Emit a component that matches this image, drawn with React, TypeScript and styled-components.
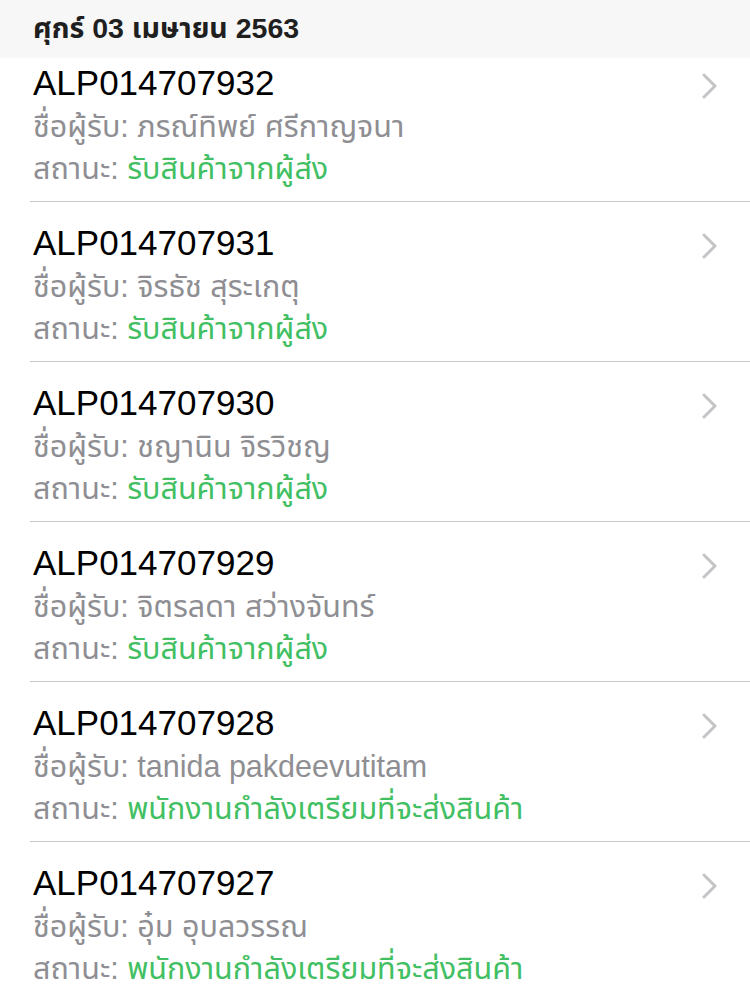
import React from "react";
import styled, { createGlobalStyle } from "styled-components";

const Global = createGlobalStyle`
  html, body { margin: 0; padding: 0; background: #ffffff; }
  body { font-family: "Liberation Sans", "Noto Sans Thai", "Noto Sans", sans-serif; -webkit-font-smoothing: antialiased; }
`;

const Page = styled.div`
  width: 750px;
  height: 989px;
  overflow: hidden;
  background: #ffffff;
`;

const SectionHeader = styled.div`
  height: 58px;
  background: #f7f7f7;
  display: flex;
  align-items: center;
  padding-left: 33px;
  font-size: 28.5px;
  font-weight: 700;
  color: #1f1f1f;
  box-sizing: border-box;
`;

const Row = styled.div<{ $first?: boolean }>`
  display: flex;
  align-items: flex-start;
  margin-left: 30px;
  height: ${(p) => (p.$first ? 144 : 160)}px;
  box-sizing: border-box;
  border-bottom: 1px solid #c8c7cc;
  padding-top: ${(p) => (p.$first ? 3 : 19)}px;
`;

const Body = styled.div`
  flex: 1;
  display: flex;
  flex-direction: column;
  padding-left: 3px;
`;

const Code = styled.div`
  font-size: 35px;
  line-height: 44px;
  color: #000000;
`;

const Line = styled.div`
  font-size: 30.5px;
  line-height: 42px;
  color: #8e8e93;
`;

const Status = styled.span`
  color: #42bf62;
`;

const Chevron = styled.div`
  width: 48px;
  display: flex;
  justify-content: flex-start;
  padding-top: 12px;
`;

const items = [
  { code: "ALP014707932", name: "ภรณ์ทิพย์ ศรีกาญจนา", status: "รับสินค้าจากผู้ส่ง" },
  { code: "ALP014707931", name: "จิรธัช สุระเกตุ", status: "รับสินค้าจากผู้ส่ง" },
  { code: "ALP014707930", name: "ชญานิน จิรวิชญ", status: "รับสินค้าจากผู้ส่ง" },
  { code: "ALP014707929", name: "จิตรลดา สว่างจันทร์", status: "รับสินค้าจากผู้ส่ง" },
  { code: "ALP014707928", name: "tanida pakdeevutitam", status: "พนักงานกำลังเตรียมที่จะส่งสินค้า" },
  { code: "ALP014707927", name: "อุ๋ม อุบลวรรณ", status: "พนักงานกำลังเตรียมที่จะส่งสินค้า" },
];

export default function App() {
  return (
    <Page>
      <Global />
      <SectionHeader>ศุกร์ 03 เมษายน 2563</SectionHeader>
      {items.map((it, i) => (
        <Row key={it.code} $first={i === 0}>
          <Body>
            <Code>{it.code}</Code>
            <Line>ชื่อผู้รับ: {it.name}</Line>
            <Line>
              สถานะ: <Status>{it.status}</Status>
            </Line>
          </Body>
          <Chevron>
            <svg width="16" height="26" viewBox="0 0 16 26">
              <path d="M2 2 L13 13 L2 24" fill="none" stroke="#c4c4c7" strokeWidth="3" strokeLinecap="round" strokeLinejoin="round" />
            </svg>
          </Chevron>
        </Row>
      ))}
    </Page>
  );
}
